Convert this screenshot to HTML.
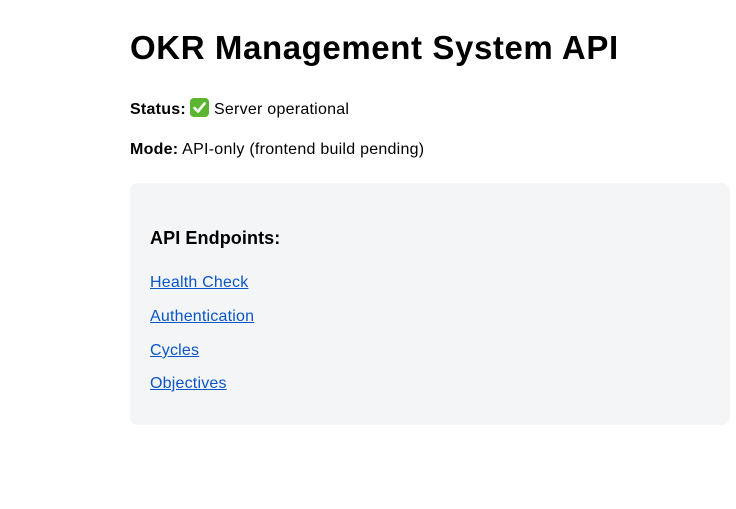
<!DOCTYPE html>
<html><head><meta charset="utf-8"><style>
body{margin:0;width:736px;height:509px;background:#fff;font-family:"Liberation Sans",Arial,sans-serif;color:#000;position:relative;overflow:hidden}
h1{position:absolute;left:130px;top:27px;margin:0;font-size:33px;line-height:42px;font-weight:bold;letter-spacing:0.6px}
p{position:absolute;left:130px;margin:0;font-size:16px;line-height:20px;letter-spacing:0.25px}
.box{position:absolute;left:130px;top:183px;width:600px;height:242px;background:#f4f5f7;border-radius:8px}
.box h3{position:absolute;left:20px;top:44px;margin:0;font-size:18px;line-height:22px;font-weight:bold;letter-spacing:0.1px}
.box a{position:absolute;left:20px;font-size:16px;line-height:20px;color:#0a55c8;text-decoration:underline;letter-spacing:0.2px}
.ck{display:inline-block;width:19px;height:19px;background:#5cb531;border-radius:4px;vertical-align:-3px;margin:0 5px 0 2px;position:relative}
</style></head><body>
<h1>OKR Management System API</h1>
<p style="top:98px"><b>Status:</b><span class="ck" style="margin-left:4px"><svg width="19" height="19" viewBox="0 0 19 19"><path d="M4.5 10 L8 13.5 L14.5 5.5" stroke="#fff" stroke-width="2.6" fill="none" stroke-linecap="round" stroke-linejoin="round"/></svg></span>Server operational</p>
<p style="top:140px"><b>Mode:</b> API-only (frontend build pending)</p>
<div class="box">
<h3>API Endpoints:</h3>
<a style="top:90px">Health Check</a>
<a style="top:124px">Authentication</a>
<a style="top:158px">Cycles</a>
<a style="top:191px">Objectives</a>
</div>
</body></html>
